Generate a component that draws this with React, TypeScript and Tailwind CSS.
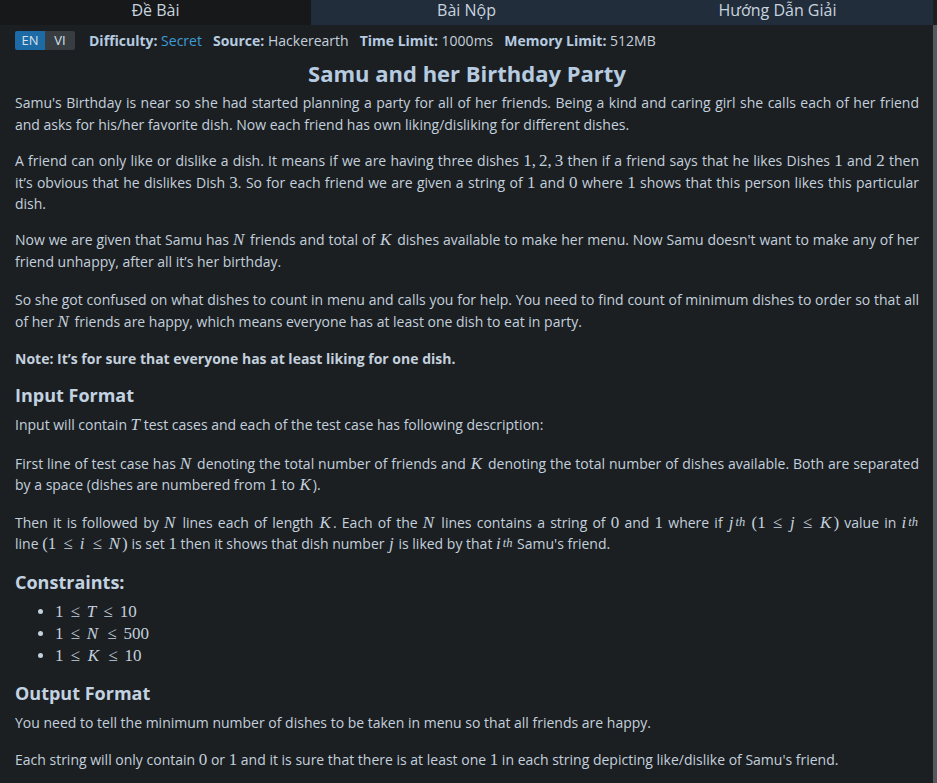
import type { ReactNode } from 'react'

// inline math, roughly like KaTeX output
function M({ children }: { children: ReactNode }) {
    return <span className="font-['Liberation_Serif',serif] text-[17px] leading-none whitespace-nowrap">{children}</span>
}

// italic math letters; the KaTeX glyphs are a bit wider than Liberation's
const letterPad: Record<string, string> = {
    K: 'ml-[1px] mr-[2px]',
    N: 'mr-[2px]',
    T: '',
    j: 'ml-[1px] mr-[1px]',
    i: 'mr-[1px]',
}

function V({ children }: { children: string }) {
    return <span className={`italic ${letterPad[children] ?? ''}`}>{children}</span>
}

function Sup({ children }: { children: ReactNode }) {
    return <sup className="italic text-[12.5px] relative -top-[2px] ml-[1px] mr-[1px]">{children}</sup>
}

const le = <span className="mx-[7px]">≤</span>
const comma = <span className="mr-[3px]">,</span>

export default function App() {
    return (
        <div className="min-h-screen bg-[#1c1f22] text-[#c3d0dd] font-['Open_Sans',sans-serif] flex">
            <div className="flex-1 min-w-0">
                {/* Tabs */}
                <div className="grid grid-cols-3 h-[25px] text-[16px] leading-[20px] text-[#c9d4df]">
                    <div className="bg-[#16181a] text-center">Đề Bài</div>
                    <div className="bg-[#212d3b] text-center">Bài Nộp</div>
                    <div className="bg-[#212d3b] text-center">Hướng Dẫn Giải</div>
                </div>

                <div className="pl-[15px] pr-[14px]">
                    {/* Meta row */}
                    <div className="mt-[6px] flex items-center h-[19px] text-[14px] gap-[11px]">
                        <div className="flex h-[19px] rounded-[2px] overflow-hidden text-[13px] text-[#d6e0ea]">
                            <span className="bg-[#1d6ba6] w-[30px] flex items-center justify-center">EN</span>
                            <span className="bg-[#383d42] w-[30px] flex items-center justify-center">VI</span>
                        </div>
                        <div className="flex items-center gap-[11px] ml-[3px]">
                            <span><b className="text-[#b6cbe0]">Difficulty:</b> <span className="text-[#3c9cd6]">Secret</span></span>
                            <span><b className="text-[#b6cbe0]">Source:</b> Hackerearth</span>
                            <span><b className="text-[#b6cbe0]">Time Limit:</b> 1000ms</span>
                            <span><b className="text-[#b6cbe0]">Memory Limit:</b> 512MB</span>
                        </div>
                    </div>

                    <h1 className="mt-[8px] text-center text-[22px] leading-[30px] font-bold text-[#b6cbe0]">
                        Samu and her Birthday Party
                    </h1>

                    <div className="mt-[4px] text-[14px] leading-[21.6px] text-justify">
                        <p className="mb-[15px]">
                            Samu's Birthday is near so she had started planning a party for all of her friends. Being a kind and caring girl she calls each of her friend and asks for his/her favorite dish. Now each friend has own liking/disliking for different dishes.
                        </p>
                        <p className="mb-[14px]">
                            A friend can only like or dislike a dish. It means if we are having three dishes <M>1{comma}2{comma}3</M> then if a friend says that he likes Dishes <M>1</M> and <M>2</M> then it’s obvious that he dislikes Dish <M>3</M>. So for each friend we are given a string of <M>1</M> and <M>0</M> where <M>1</M> shows that this person likes this particular dish.
                        </p>
                        <p className="mb-[17px]">
                            Now we are given that Samu has <M><V>N</V></M> friends and total of <M><V>K</V></M> dishes available to make her menu. Now Samu doesn't want to make any of her friend unhappy, after all it’s her birthday.
                        </p>
                        <p className="mb-[16px]">
                            So she got confused on what dishes to count in menu and calls you for help. You need to find count of minimum dishes to order so that all of her <M><V>N</V></M> friends are happy, which means everyone has at least one dish to eat in party.
                        </p>
                        <p className="mb-[13px] font-bold">
                            Note: It’s for sure that everyone has at least liking for one dish.
                        </p>

                        <h2 className="text-[18px] leading-[24px] font-bold text-[#c3d2e0] mb-[7px]">Input Format</h2>
                        <p className="mb-[17px]">
                            Input will contain <M><V>T</V></M> test cases and each of the test case has following description:
                        </p>
                        <p className="mb-[16px]">
                            First line of test case has <M><V>N</V></M> denoting the total number of friends and <M><V>K</V></M> denoting the total number of dishes available. Both are separated by a space (dishes are numbered from <M>1</M> to <M><V>K</V></M>).
                        </p>
                        <p className="mb-[15px]">
                            Then it is followed by <M><V>N</V></M> lines each of length <M><V>K</V></M>. Each of the <M><V>N</V></M> lines contains a string of <M>0</M> and <M>1</M> where if <M><V>j</V><Sup>th</Sup></M> <M>(1{le}<V>j</V>{le}<V>K</V>)</M> value in <M><V>i</V><Sup>th</Sup></M> <span className="whitespace-nowrap">line <M>(1{le}<V>i</V>{le}<V>N</V>)</M></span> is set <M>1</M> then it shows that dish number <M><V>j</V></M> is liked by that <M><V>i</V><Sup>th</Sup></M> Samu's friend.
                        </p>

                        <h2 className="text-[18px] leading-[24px] font-bold text-[#c3d2e0] mb-[7px]">Constraints:</h2>
                        <ul className="list-disc pl-[40px] mb-[14px] leading-[22px] text-left">
                            <li><M>1{le}<V>T</V>{le}10</M></li>
                            <li><M>1{le}<V>N</V>{le}500</M></li>
                            <li><M>1{le}<V>K</V>{le}10</M></li>
                        </ul>

                        <h2 className="text-[18px] leading-[24px] font-bold text-[#c3d2e0] mb-[7px]">Output Format</h2>
                        <p className="mb-[15px]">
                            You need to tell the minimum number of dishes to be taken in menu so that all friends are happy.
                        </p>
                        <p className="mb-[15px]">
                            Each string will only contain <M>0</M> or <M>1</M> and it is sure that there is at least one <M>1</M> in each string depicting like/dislike of Samu's friend.
                        </p>
                    </div>
                </div>
            </div>
            {/* scrollbar */}
            <div className="w-[4px] mt-[25px] bg-[#55595d]" />
        </div>
    )
}
